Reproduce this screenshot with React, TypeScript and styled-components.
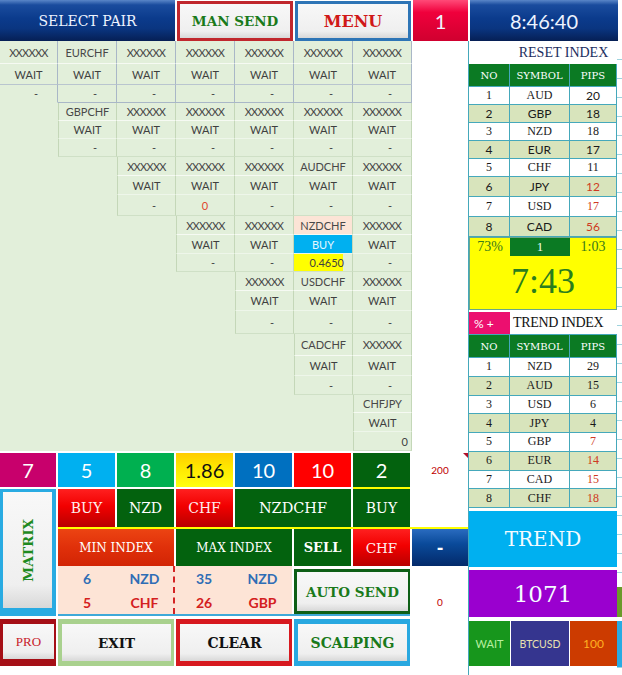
import React from "react";
import styled, { createGlobalStyle } from "styled-components";

const SLAB = `"DejaVu Serif", "Liberation Serif", serif`;
const TIMES = `"Liberation Serif", "DejaVu Serif", serif`;
const SANS = `Lato, "Liberation Sans", Arial, sans-serif`;
const TEAL = "#45a8bb";
const DARK_GREEN = "#03620e";
const HEAD_GREEN = "#0b7a23";
const RED_GLOSS = "linear-gradient(180deg, #ff2020 0%, #f20000 45%, #b80000 100%)";
const BLUE_GLOSS =
  "linear-gradient(180deg, #5a86c8 0%, #1a4c9e 12%, #0b3b8c 45%, #0a3580 70%, #061f55 100%)";

const GlobalStyle = createGlobalStyle`
  html, body { margin: 0; padding: 0; background: #ffffff; }
  body { font-family: ${SANS}; }
  * { box-sizing: border-box; }
`;

const Page = styled.div`
  width: 622px;
  height: 675px;
  overflow: hidden;
  background: #fff;
  display: flex;
  flex-direction: column;
`;

/* ---------- top bar ---------- */

const TopBar = styled.div`
  display: grid;
  grid-template-columns: 175px 116px 116px 55px 148px;
  column-gap: 2px;
  height: 41px;
  flex-shrink: 0;
`;

const GlossCell = styled.div<{ $bg: string; $font: string; $size: number }>`
  background: ${(p) => p.$bg};
  color: #eef4ff;
  display: flex;
  align-items: center;
  justify-content: center;
  font-family: ${(p) => p.$font};
  font-size: ${(p) => p.$size}px;
  white-space: nowrap;
`;

const TopFrame = styled.div<{ $frame: string }>`
  background: ${(p) => p.$frame};
  padding: 3px;
  margin-top: 1px;
  display: flex;
`;

const ButtonFace = styled.div<{
  $color: string;
  $font?: string;
  $size: number;
  $weight?: number;
}>`
  flex: 1;
  display: flex;
  align-items: center;
  justify-content: center;
  background: linear-gradient(180deg, #f8f8f8 0%, #efefef 80%, #d8d8d8 100%);
  color: ${(p) => p.$color};
  font-family: ${(p) => p.$font ?? SLAB};
  font-size: ${(p) => p.$size}px;
  font-weight: ${(p) => p.$weight ?? 700};
  white-space: nowrap;
`;

/* ---------- pair matrix ---------- */

const ROW_H = [23, 21, 18, 18, 18, 18, 19, 19, 21, 19, 19, 18, 19, 20, 23, 22, 20, 19, 18, 19, 19];

const Body = styled.div`
  display: flex;
  flex: 1;
`;

const LeftCol = styled.div`
  width: 468px;
  display: flex;
  flex-direction: column;
`;

const MatrixGrid = styled.div`
  width: 412px;
  display: grid;
  grid-template-columns: 58px repeat(6, 59px);
  grid-template-rows: ${ROW_H.map((h) => `${h}px`).join(" ")};
  background: #e2efda;
`;

type Align = "center" | "right";

const MCell = styled.div<{
  $col: number;
  $row: number;
  $vline: string;
  $hline: string;
  $lead?: string;
  $bg?: string;
  $fg?: string;
  $align?: Align;
  $pr?: number;
  $tight?: boolean;
}>`
  grid-column: ${(p) => p.$col + 1};
  grid-row: ${(p) => p.$row + 1};
  display: flex;
  align-items: center;
  justify-content: ${(p) => (p.$align === "right" ? "flex-end" : "center")};
  padding-right: ${(p) => p.$pr ?? 0}px;
  background: ${(p) => p.$bg ?? "transparent"};
  color: ${(p) => p.$fg ?? "#3f3f3f"};
  border-right: 1px solid ${(p) => p.$vline};
  border-bottom: 1px solid ${(p) => p.$hline};
  border-left: ${(p) => (p.$lead ? `1px solid ${p.$lead}` : "none")};
  font-family: ${SANS};
  font-size: 11px;
  letter-spacing: ${(p) => (p.$tight ? "-0.7px" : "0")};
  white-space: nowrap;
  overflow: hidden;
`;

type PairCell = {
  name: string;
  nameBg?: string;
  status?: string;
  statusBg?: string;
  statusFg?: string;
  value?: string;
  valueFg?: string;
  valueBg?: string;
  valueAlign?: Align;
  valuePr?: number;
};

const X: PairCell = { name: "XXXXXX" };
const YELLOW_PART = "linear-gradient(90deg, #ffff00 0, #ffff00 49px, transparent 49px)";

const BLOCKS: PairCell[][] = [
  [X, { name: "EURCHF" }, X, X, X, X, X],
  [{ name: "GBPCHF" }, X, X, X, X, X],
  [X, { ...X, value: "0", valueFg: "#e0452c", valueAlign: "center" }, X, { name: "AUDCHF" }, X],
  [
    X,
    X,
    {
      name: "NZDCHF",
      nameBg: "#fce4d6",
      status: "BUY",
      statusBg: "#00b0f0",
      statusFg: "#e6f7ff",
      value: "0.4650",
      valueBg: YELLOW_PART,
      valuePr: 8,
    },
    X,
  ],
  [X, { name: "USDCHF" }, X],
  [{ name: "CADCHF" }, X],
  [{ name: "CHFJPY", value: "0", valuePr: 3 }],
];

const Matrix = () => (
  <MatrixGrid>
    {BLOCKS.map((cells, b) =>
      cells.map((c, i) => {
        const col = b + i;
        const row = b * 3;
        const head = b === 0;
        const v = head ? "#a9b7c7" : "#c4d7b8";
        const lead = !head && i === 0 ? "#c4d7b8" : undefined;
        const value = c.value ?? "-";
        const isDash = value === "-";
        return (
          <React.Fragment key={`${b}-${i}`}>
            <MCell
              $col={col}
              $row={row}
              $vline={v}
              $hline="#f6faf3"
              $lead={lead}
              $bg={c.nameBg}
              $fg="#484848"
              $tight={c.name === "XXXXXX"}
            >
              {c.name}
            </MCell>
            <MCell
              $col={col}
              $row={row + 1}
              $vline={v}
              $hline={head ? "#b9c5cf" : "#eef6ea"}
              $lead={lead}
              $bg={c.statusBg}
              $fg={c.statusFg}
            >
              {c.status ?? "WAIT"}
            </MCell>
            <MCell
              $col={col}
              $row={row + 2}
              $vline={v}
              $hline={head ? (col === 0 ? "transparent" : "#a9b7c7") : "#cfe0c6"}
              $lead={lead}
              $bg={c.valueBg}
              $fg={c.valueFg}
              $align={isDash ? "right" : c.valueAlign ?? "right"}
              $pr={isDash ? 19 : c.valuePr ?? 0}
            >
              {value}
            </MCell>
          </React.Fragment>
        );
      })
    )}
  </MatrixGrid>
);

/* ---------- bottom controls ---------- */

const Controls = styled.div`
  display: grid;
  grid-template-columns: 56px 57px 57px 57px 57px 57px 57px 56px;
  grid-template-rows: 34px 2px 38px 2px 37px 48px 2px 3px 47px;
  column-gap: 2px;
  padding-top: 2px;
`;

const Slot = styled.div<{ $col: string; $row: string }>`
  grid-column: ${(p) => p.$col};
  grid-row: ${(p) => p.$row};
  min-width: 0;
`;

const Tile = styled(Slot)<{
  $bg: string;
  $fg?: string;
  $font?: string;
  $size?: number;
  $weight?: number;
  $pt?: number;
}>`
  display: flex;
  align-items: center;
  justify-content: center;
  padding-top: ${(p) => p.$pt ?? 0}px;
  background: ${(p) => p.$bg};
  color: ${(p) => p.$fg ?? "#ffffff"};
  font-family: ${(p) => p.$font ?? SLAB};
  font-size: ${(p) => p.$size ?? 14}px;
  font-weight: ${(p) => p.$weight ?? 400};
  white-space: nowrap;
`;

const NoteTile = styled(Tile)`
  position: relative;
  &::after {
    content: "";
    position: absolute;
    top: 0;
    right: 0;
    border-top: 5px solid #b0102a;
    border-left: 5px solid transparent;
  }
`;

const Rule = styled(Slot)<{ $color: string }>`
  background: ${(p) => p.$color};
`;

const Frame = styled(Slot)<{ $frame: string; $pad: string; $mt?: number }>`
  display: flex;
  background: ${(p) => p.$frame};
  padding: ${(p) => p.$pad};
  margin-top: ${(p) => p.$mt ?? 0}px;
`;

const VerticalLabel = styled.span`
  writing-mode: vertical-rl;
  transform: rotate(180deg);
`;

const InfoPanel = styled(Slot)`
  display: grid;
  grid-template-columns: 1fr 1fr;
  background: #fde4d6;
`;

const InfoHalf = styled.div<{ $divider?: boolean }>`
  display: grid;
  grid-template-columns: 58px 1fr;
  grid-template-rows: 23px 24px;
  padding-top: 1px;
  border-right: ${(p) => (p.$divider ? "2px dashed #d42424" : "none")};
`;

const InfoText = styled.div<{ $color: string }>`
  display: flex;
  align-items: center;
  justify-content: center;
  font-family: ${SANS};
  font-weight: 700;
  font-size: 14px;
  color: ${(p) => p.$color};
`;

const INFO_BLUE = "#2f6db5";
const INFO_RED = "#d42020";

const BottomControls = () => (
  <Controls>
    {/* row A: counters */}
    <Tile $col="1" $row="1" $bg="#c8006c" $font={SANS} $size={20}>7</Tile>
    <Tile $col="2" $row="1" $bg="#00b0f0" $font={SANS} $size={20}>5</Tile>
    <Tile $col="3" $row="1" $bg="#00b050" $font={SANS} $size={20}>8</Tile>
    <Tile
      $col="4"
      $row="1"
      $bg="linear-gradient(180deg, #ffcc00 0%, #ffe600 40%, #ffff10 100%)"
      $fg="#111"
      $font={SANS}
      $size={20}
    >
      1.86
    </Tile>
    <Tile $col="5" $row="1" $bg="#0070c0" $font={SANS} $size={20}>10</Tile>
    <Tile $col="6" $row="1" $bg="#ff0000" $font={SANS} $size={20}>10</Tile>
    <Tile $col="7" $row="1" $bg={DARK_GREEN} $font={SANS} $size={20}>2</Tile>
    <NoteTile $col="8" $row="1" $bg="#fff" $fg="#c00000" $font={SANS} $size={10}>200</NoteTile>
    <Rule $col="7" $row="2" $color="#ffff00" />

    {/* row B: signal */}
    <Frame $col="1" $row="3 / 8" $frame="#29abe2" $pad="3px 4px 8px 3px">
      <ButtonFace $color="#1f8a1f" $size={13.5}>
        <VerticalLabel>MATRIX</VerticalLabel>
      </ButtonFace>
    </Frame>
    <Tile $col="2" $row="3" $bg={RED_GLOSS} $fg="#fdeeee">BUY</Tile>
    <Tile $col="3" $row="3" $bg={DARK_GREEN}>NZD</Tile>
    <Tile $col="4" $row="3" $bg={RED_GLOSS} $fg="#fdeeee">CHF</Tile>
    <Tile $col="5 / 7" $row="3" $bg={DARK_GREEN} $size={14.5}>NZDCHF</Tile>
    <Tile $col="7" $row="3" $bg={DARK_GREEN}>BUY</Tile>
    <Rule $col="2 / 9" $row="4" $color="#ffff00" />

    {/* row C: index */}
    <Tile
      $col="2 / 4"
      $row="5"
      $bg="linear-gradient(180deg, #ec4412 0%, #e0300a 50%, #d22404 100%)"
      $size={12}
    >
      MIN INDEX
    </Tile>
    <Tile $col="4 / 6" $row="5" $bg={DARK_GREEN} $size={12}>MAX INDEX</Tile>
    <Tile $col="6" $row="5" $bg={DARK_GREEN} $size={13} $weight={700}>SELL</Tile>
    <Tile $col="7" $row="5" $bg={RED_GLOSS} $fg="#fdeeee" $size={13.5}>CHF</Tile>
    <Tile
      $col="8"
      $row="5"
      $bg="linear-gradient(180deg, #2a6cc0 0%, #0a4a9a 40%, #032a6a 100%)"
      $size={16}
      $weight={700}
    >
      -
    </Tile>

    {/* row D: min / max details */}
    <InfoPanel $col="2 / 6" $row="6">
      <InfoHalf $divider>
        <InfoText $color={INFO_BLUE}>6</InfoText>
        <InfoText $color={INFO_BLUE}>NZD</InfoText>
        <InfoText $color={INFO_RED}>5</InfoText>
        <InfoText $color={INFO_RED}>CHF</InfoText>
      </InfoHalf>
      <InfoHalf>
        <InfoText $color={INFO_BLUE}>35</InfoText>
        <InfoText $color={INFO_BLUE}>NZD</InfoText>
        <InfoText $color={INFO_RED}>26</InfoText>
        <InfoText $color={INFO_RED}>GBP</InfoText>
      </InfoHalf>
    </InfoPanel>
    <Frame $col="6 / 8" $row="6" $frame="#0e5f16" $pad="3px 2px 3px 3px" $mt={3}>
      <ButtonFace $color="#1a7a1a" $size={13.5}>AUTO SEND</ButtonFace>
    </Frame>
    <Tile $col="8" $row="6" $bg="#fff" $fg="#c00000" $font={SANS} $size={10} $pt={24}>0</Tile>
    <Rule $col="2 / 8" $row="7" $color="#3fa9d8" />

    {/* row E: buttons */}
    <Frame $col="1" $row="9" $frame="#a50f16" $pad="5px 2px 7px 3px">
      <ButtonFace $color="#c8202a" $font={TIMES} $size={13} $weight={400}>PRO</ButtonFace>
    </Frame>
    <Frame $col="2 / 4" $row="9" $frame="#a9d18e" $pad="5px 3px 5px 4px">
      <ButtonFace $color="#111" $size={13.5}>EXIT</ButtonFace>
    </Frame>
    <Frame $col="4 / 6" $row="9" $frame="#d7191f" $pad="5px 3px 5px 4px">
      <ButtonFace $color="#111" $size={14}>CLEAR</ButtonFace>
    </Frame>
    <Frame $col="6 / 8" $row="9" $frame="#29a8e0" $pad="5px 3px 5px 4px">
      <ButtonFace $color="#1a7a1a" $size={14}>SCALPING</ButtonFace>
    </Frame>
  </Controls>
);

/* ---------- right panel ---------- */

const RightPanel = styled.div`
  width: 149px;
  display: flex;
  flex-direction: column;
  border-left: 1px solid ${TEAL};
`;

const TitleRow = styled.div`
  height: 23px;
  display: grid;
  grid-template-columns: 41px 107px;
  background: #fff;
`;

const Title = styled.div`
  grid-column: 2;
  display: flex;
  align-items: center;
  justify-content: center;
  font-family: ${TIMES};
  font-size: 14px;
  color: #1c2e5e;
  white-space: nowrap;
`;

const TRow = styled.div<{ $h: number; $bg: string }>`
  display: grid;
  grid-template-columns: 41px 60px 47px;
  height: ${(p) => p.$h}px;
  background: ${(p) => p.$bg};
`;

const TCell = styled.div<{ $color?: string; $sans?: boolean; $head?: boolean }>`
  display: flex;
  align-items: center;
  justify-content: center;
  border-right: 1px solid ${TEAL};
  border-bottom: 1px solid ${TEAL};
  font-family: ${(p) => (p.$head ? SLAB : p.$sans ? SANS : TIMES)};
  font-size: ${(p) => (p.$head ? 10 : 12)}px;
  color: ${(p) => p.$color ?? "#1a1a1a"};
  white-space: nowrap;
`;

const YellowBox = styled.div`
  height: 73px;
  background: #ffff00;
  border: 1px solid #6aa68a;
  display: flex;
  flex-direction: column;
`;

const YellowTop = styled.div`
  display: grid;
  grid-template-columns: 40px 60px 46px;
  height: 18px;
`;

const YellowSmall = styled.div<{ $boxed?: boolean }>`
  display: flex;
  align-items: center;
  justify-content: center;
  background: ${(p) => (p.$boxed ? HEAD_GREEN : "transparent")};
  color: ${(p) => (p.$boxed ? "#f2fff2" : "#3a7a1a")};
  font-family: ${TIMES};
  font-size: ${(p) => (p.$boxed ? 13 : 14)}px;
`;

const BigClock = styled.div`
  flex: 1;
  display: flex;
  align-items: center;
  justify-content: center;
  padding-bottom: 4px;
  font-family: ${TIMES};
  font-size: 36px;
  color: #2a7d1e;
`;

const PercentRow = styled.div`
  margin-top: 2px;
  height: 23px;
  display: grid;
  grid-template-columns: 41px 107px;
  border-bottom: 1px solid ${TEAL};
`;

const PercentTag = styled.div`
  display: flex;
  align-items: center;
  padding-left: 5px;
  background: #ec0f6f;
  color: #fff;
  font-family: ${SANS};
  font-size: 12px;
`;

const SectionTitle = styled.div`
  display: flex;
  align-items: center;
  padding-left: 3px;
  background: #fff;
  color: #111;
  font-family: ${TIMES};
  font-size: 14px;
  letter-spacing: -0.3px;
  white-space: nowrap;
`;

const BigTile = styled.div<{ $bg: string; $h: number; $mt: number; $size: number }>`
  height: ${(p) => p.$h}px;
  margin-top: ${(p) => p.$mt}px;
  display: flex;
  align-items: center;
  justify-content: center;
  background: ${(p) => p.$bg};
  color: #f4fbff;
  font-family: ${SLAB};
  font-size: ${(p) => p.$size}px;
`;

const StatusRow = styled.div`
  margin-top: 4px;
  height: 45px;
  display: grid;
  grid-template-columns: 41px 58px 47px;
  column-gap: 1px;
`;

const StatusCell = styled.div<{ $bg: string; $fg: string; $size: number }>`
  display: flex;
  align-items: center;
  justify-content: center;
  background: ${(p) => p.$bg};
  color: ${(p) => p.$fg};
  font-family: ${SANS};
  font-size: ${(p) => p.$size}px;
`;

const Sliver = styled.div`
  width: 5px;
  display: flex;
  flex-direction: column;
  background: repeating-linear-gradient(180deg, #fff 0, #fff 18px, #9fd3de 18px, #9fd3de 19px);
`;

const SliverBlock = styled.div<{ $bg: string; $h: number; $mt: number }>`
  height: ${(p) => p.$h}px;
  margin-top: ${(p) => p.$mt}px;
  background: ${(p) => p.$bg};
`;

type TableRow = [string, string, string, boolean?];
const PIP_RED = "#cf3a22";

const RESET_ROWS: TableRow[] = [
  ["1", "AUD", "20"],
  ["2", "GBP", "18"],
  ["3", "NZD", "18"],
  ["4", "EUR", "17"],
  ["5", "CHF", "11"],
  ["6", "JPY", "12", true],
  ["7", "USD", "17", true],
  ["8", "CAD", "56", true],
];
const RESET_H = [18, 18, 18, 18, 18, 20, 20, 20];

const TREND_ROWS: TableRow[] = [
  ["1", "NZD", "29"],
  ["2", "AUD", "15"],
  ["3", "USD", "6"],
  ["4", "JPY", "4"],
  ["5", "GBP", "7", true],
  ["6", "EUR", "14", true],
  ["7", "CAD", "15", true],
  ["8", "CHF", "18", true],
];

const HeadRow = () => (
  <TRow $h={23} $bg={HEAD_GREEN}>
    <TCell $head $color="#fff">NO</TCell>
    <TCell $head $color="#fff">SYMBOL</TCell>
    <TCell $head $color="#fff">PIPS</TCell>
  </TRow>
);

const IndexTable = ({
  rows,
  heights,
  sansAlt,
}: {
  rows: TableRow[];
  heights: number[];
  sansAlt: boolean;
}) => (
  <>
    <HeadRow />
    {rows.map(([no, sym, pips, red], i) => {
      const alt = i % 2 === 1;
      const sans = sansAlt && alt;
      return (
        <TRow key={no} $h={heights[i]} $bg={alt ? "#d8e4bc" : "#fff"}>
          <TCell $sans={sans}>{no}</TCell>
          <TCell $sans={sans}>{sym}</TCell>
          <TCell $sans={sansAlt && (alt || i < 1)} $color={red ? PIP_RED : undefined}>
            {pips}
          </TCell>
        </TRow>
      );
    })}
  </>
);

const SidePanel = () => (
  <RightPanel>
    <TitleRow>
      <Title>RESET INDEX</Title>
    </TitleRow>
    <IndexTable rows={RESET_ROWS} heights={RESET_H} sansAlt />
    <YellowBox>
      <YellowTop>
        <YellowSmall>73%</YellowSmall>
        <YellowSmall $boxed>1</YellowSmall>
        <YellowSmall>1:03</YellowSmall>
      </YellowTop>
      <BigClock>7:43</BigClock>
    </YellowBox>
    <PercentRow>
      <PercentTag>% +</PercentTag>
      <SectionTitle>TREND INDEX</SectionTitle>
    </PercentRow>
    <IndexTable rows={TREND_ROWS} heights={Array(8).fill(18.75)} sansAlt={false} />
    <BigTile $bg="#00b0f0" $h={56} $mt={3} $size={20}>TREND</BigTile>
    <BigTile $bg="#9a00cf" $h={47} $mt={3} $size={23}>1071</BigTile>
    <StatusRow>
      <StatusCell $bg="#17961c" $fg="#b8f0a0" $size={11}>WAIT</StatusCell>
      <StatusCell $bg="#35358f" $fg="#e8e0b0" $size={10.5}>BTCUSD</StatusCell>
      <StatusCell $bg="#cc3b00" $fg="#ffb020" $size={12}>100</StatusCell>
    </StatusRow>
  </RightPanel>
);

export default function App() {
  return (
    <>
      <GlobalStyle />
      <Page>
        <TopBar>
          <GlossCell $bg={BLUE_GLOSS} $font={SLAB} $size={14}>
            SELECT PAIR
          </GlossCell>
          <TopFrame $frame="#c0272d">
            <ButtonFace $color="#1a7a1a" $size={13.5}>MAN SEND</ButtonFace>
          </TopFrame>
          <TopFrame $frame="#2e75b6">
            <ButtonFace $color="#d01818" $size={16}>MENU</ButtonFace>
          </TopFrame>
          <GlossCell
            $bg="linear-gradient(180deg, #ff4a78 0%, #f0003c 30%, #d0002f 100%)"
            $font={SANS}
            $size={20}
          >
            1
          </GlossCell>
          <GlossCell $bg={BLUE_GLOSS} $font={SANS} $size={20}>
            8:46:40
          </GlossCell>
        </TopBar>
        <Body>
          <LeftCol>
            <Matrix />
            <BottomControls />
          </LeftCol>
          <SidePanel />
          <Sliver>
            <SliverBlock $bg="#6a9a2a" $h={30} $mt={546} />
            <SliverBlock $bg="#29abe2" $h={46} $mt={4} />
          </Sliver>
        </Body>
      </Page>
    </>
  );
}
